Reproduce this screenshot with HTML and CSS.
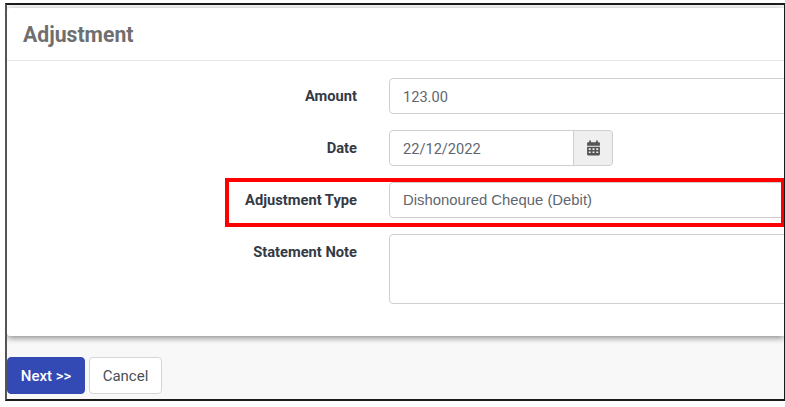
FILE: index.html
```html
<!DOCTYPE html>
<html lang="en">
<head>
<meta charset="utf-8">
<title>Adjustment</title>
<link rel="stylesheet" href="styles.css">
</head>
<body>
<div class="frame">
  <div class="card">
    <header class="card-head"><h1>Adjustment</h1></header>
    <form class="form">
      <div class="row">
        <label class="lbl">Amount</label>
        <div class="input">123.00</div>
      </div>
      <div class="row">
        <label class="lbl">Date</label>
        <div class="date">
          <div class="input date-input">22/12/2022</div>
          <div class="addon">
            <svg width="15" height="16" viewBox="0 0 14 14" preserveAspectRatio="none" aria-hidden="true"><path class="ico" fill-rule="evenodd" d="M3 0.5h1.6V2h4.8V0.5H11V2h1c.6 0 1 .4 1 1v2H1V3c0-.6.4-1 1-1h1zM1 6h12v6.5c0 .6-.4 1-1 1H2c-.6 0-1-.4-1-1zM2.6 7.3v1.4h1.8V7.3zm3.5 0v1.4h1.8V7.3zm3.5 0v1.4h1.8V7.3zM2.6 10v1.4h1.8V10zm3.5 0v1.4h1.8V10zm3.5 0v1.4h1.8V10z"/></svg>
          </div>
        </div>
      </div>
      <div class="row">
        <label class="lbl">Adjustment Type</label>
        <div class="input select">Dishonoured Cheque (Debit)</div>
      </div>
      <div class="row">
        <label class="lbl">Statement Note</label>
        <div class="input note"></div>
      </div>
    </form>
  </div>
  <footer class="foot">
    <button type="button" class="btn primary">Next &gt;&gt;</button>
    <button type="button" class="btn">Cancel</button>
  </footer>
  <div class="highlight"></div>
</div>
</body>
</html>
```
FILE: styles.css
```css
* { box-sizing: border-box; }
html, body { margin: 0; padding: 0; background: #fff; }
body { width: 785px; height: 407px; overflow: hidden; font-family: Roboto, "Liberation Sans", sans-serif; }
.frame {
  position: relative;
  margin: 3px 0 0 5px;
  width: 780px;
  height: 398px;
  border: 2px solid #1a1a1a;
  border-right-width: 1px;
  border-left-color: #555;
  background: #f8f8f8;
  overflow: hidden;
  display: flex;
  flex-direction: column;
}
.card {
  margin-top: 3px;
  height: 328px;
  background: #fff;
  border-radius: 3px 0 0 3px;
  box-shadow: 0 2px 6px rgba(0,0,0,.45);
  flex: none;
}
.card-head {
  height: 53px;
  padding: 13px 0 0 16px;
  border-bottom: 1px solid #e6e6e6;
}
.card-head h1 {
  margin: 0;
  font-size: 21.2px;
  line-height: 28px;
  font-weight: 700;
  color: #6f6f6f;
}
.form {
  padding-top: 17px;
  display: flex;
  flex-direction: column;
  gap: 16.5px;
}
.row {
  display: grid;
  grid-template-columns: 350px 500px;
  column-gap: 32px;
  align-items: start;
}
.lbl {
  text-align: right;
  font-size: 14.7px;
  line-height: 20px;
  font-weight: 700;
  color: #333a45;
  padding-top: 8px;
}
.input {
  height: 35.5px;
  border: 1px solid #cfcfcf;
  border-radius: 4px;
  background: #fff;
  padding: 0 13px;
  font-size: 14.6px;
  line-height: 36px;
  color: #5f6670;
}
.select {
  font-family: "Liberation Sans", Arial, sans-serif;
  font-size: 14.85px;
  line-height: 35px;
}
.note { height: 70px; }
.date { display: flex; width: 224px; }
.date-input { flex: 1; border-radius: 4px 0 0 4px; }
.addon {
  width: 40px;
  height: 35.5px;
  margin-left: -1px;
  border: 1px solid #cfcfcf;
  border-radius: 0 4px 4px 0;
  background: #efefef;
  display: flex;
  align-items: center;
  justify-content: center;
}
.ico { fill: #555; }
.foot {
  flex: 1;
  display: flex;
  align-items: flex-start;
  gap: 4px;
  padding-top: 21px;
}
.btn {
  height: 37px;
  width: 73px;
  padding: 0;
  border: 1px solid #d6d6d6;
  border-radius: 4px;
  background: #fff;
  color: #4a5058;
  font: 400 15px Roboto, "Liberation Sans", sans-serif;
}
.primary {
  width: 78px;
  background: #3349b3;
  border-color: #3349b3;
  color: #fff;
  font-weight: 500;
}
.highlight {
  position: absolute;
  left: 218px;
  top: 173px;
  width: 559px;
  height: 49px;
  border: 4px solid #f00;
  border-right-width: 3px;
}
```
